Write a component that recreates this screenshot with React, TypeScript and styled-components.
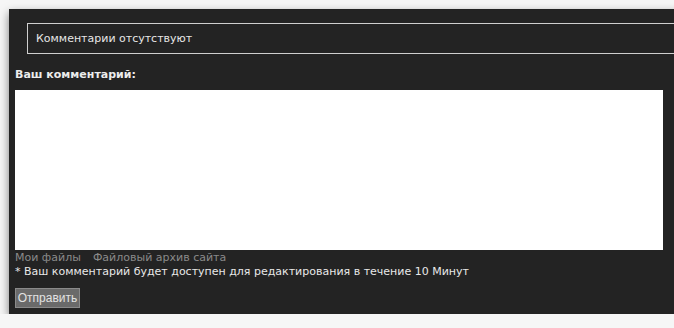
import React from 'react';
import styled, { createGlobalStyle } from 'styled-components';

const GlobalStyle = createGlobalStyle`
  html, body {
    margin: 0;
    padding: 0;
    background: #f6f6f6;
    overflow: hidden;
  }
  body {
    padding: 9px 0 0 9px;
    font-family: "DejaVu Sans", Verdana, sans-serif;
  }
`;

const Panel = styled.div`
  width: 700px;
  height: 305px;
  box-sizing: border-box;
  background: #232323;
  box-shadow: 0 4px 9px rgba(0, 0, 0, 0.5);
  padding: 14px 0 0 6px;
`;

const EmptyBox = styled.div`
  margin-left: 12px;
  height: 29px;
  border: 1px solid #cfcfcf;
  border-right: none;
  color: #e6e6e6;
  font-size: 11px;
  line-height: 29px;
  padding-left: 8px;
`;

const Label = styled.div`
  margin-top: 14px;
  color: #ececec;
  font-size: 11px;
  font-weight: bold;
  line-height: 13px;
`;

const TextArea = styled.textarea`
  display: block;
  margin: 9px 0 0;
  width: 648px;
  height: 160px;
  box-sizing: border-box;
  border: none;
  background: #fff;
  resize: none;
  padding: 2px;
  font-family: inherit;
`;

const Links = styled.div`
  display: flex;
  gap: 12px;
  margin-top: 1px;
  font-size: 11px;
  line-height: 14px;
`;

const FileLink = styled.a`
  color: #8a8a8a;
  text-decoration: none;
`;

const Note = styled.div`
  color: #e8e8e8;
  font-size: 11px;
  line-height: 14px;
`;

const SubmitButton = styled.button`
  margin-top: 9px;
  height: 20px;
  width: 65px;
  padding: 0;
  background: #6a6a6a;
  border: 1px solid #8a8a8a;
  color: #e2e2e2;
  font-family: "Liberation Sans", Arial, sans-serif;
  font-size: 12px;
`;

export default function App() {
  return (
    <>
      <GlobalStyle />
      <Panel>
        <EmptyBox>Комментарии отсутствуют</EmptyBox>
        <Label>Ваш комментарий:</Label>
        <TextArea />
        <Links>
          <FileLink href="#">Мои файлы</FileLink>
          <FileLink href="#">Файловый архив сайта</FileLink>
        </Links>
        <Note>* Ваш комментарий будет доступен для редактирования в течение 10 Минут</Note>
        <SubmitButton>Отправить</SubmitButton>
      </Panel>
    </>
  );
}
